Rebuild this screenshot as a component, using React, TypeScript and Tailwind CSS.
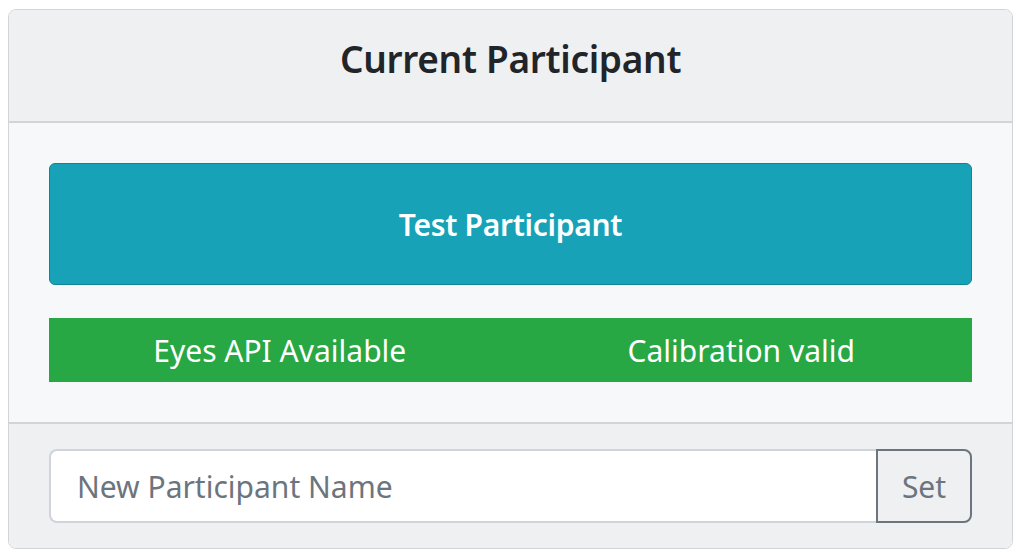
export default function App() {
  return (
    <div className="p-2 pt-[9px] bg-white min-h-screen" style={{ fontFamily: '"Noto Sans", "Open Sans", sans-serif' }}>
      <div className="w-[1005px] border border-[#d3d4d6] rounded-lg overflow-hidden">
        <div className="h-[113px] bg-[#eff0f2] border-b-2 border-[#d3d4d6] flex items-center justify-center pb-[14px]">
          <h3 className="text-[37px] font-semibold text-[#212529] leading-none tracking-[-0.3px]">Current Participant</h3>
        </div>
        <div className="bg-[#f7f8fa] px-10 pt-10 pb-10">
          <div className="h-[122px] bg-[#17a2b8] border border-[#138496] rounded-md flex items-center justify-center">
            <span className="text-white text-[30px] font-semibold tracking-[-0.3px]">Test Participant</span>
          </div>
          <div className="mt-[33px] h-16 bg-[#28a745] flex text-white text-[30px]">
            <div className="flex-1 flex items-center justify-center">Eyes API Available</div>
            <div className="flex-1 flex items-center justify-center">Calibration valid</div>
          </div>
        </div>
        <div className="bg-[#eff0f2] border-t-2 border-[#d3d4d6] px-10 pt-[25px] pb-[25px] flex">
          <input
            className="flex-1 h-[74px] bg-white border-2 border-r-0 border-[#ced4da] rounded-l-lg px-[26px] text-[30px] text-[#495057] placeholder:text-[#6c757d] outline-none"
            placeholder="New Participant Name"
          />
          <button className="w-[96px] h-[74px] border-2 border-[#6c757d] rounded-r-lg text-[30px] text-[#6c757d] bg-transparent">Set</button>
        </div>
      </div>
    </div>
  )
}
